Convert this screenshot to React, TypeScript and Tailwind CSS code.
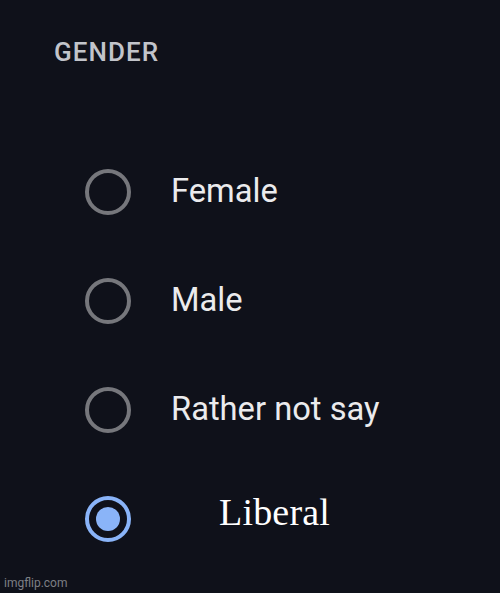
import React from "react";

const options = ["Female", "Male", "Rather not say"];

function Radio({ checked }: { checked?: boolean }) {
  if (checked) {
    return (
      <div className="w-[46px] h-[46px] rounded-full border-[4px] border-[#8ab4f8] flex items-center justify-center shrink-0">
        <div className="w-[24px] h-[24px] rounded-full bg-[#8ab4f8]" />
      </div>
    );
  }
  return <div className="w-[46px] h-[46px] rounded-full border-[4px] border-[#76777c] shrink-0" />;
}

export default function App() {
  return (
    <div className="w-[500px] h-[593px] bg-[#0f111a] relative overflow-hidden" style={{ fontFamily: "Roboto, 'Liberation Sans', sans-serif" }}>
      <div className="pt-[40px] pl-[54px]">
        <div className="text-[26px] leading-[24px] font-medium tracking-[0.04em] text-[#c2c4ca]">GENDER</div>
      </div>
      <div className="mt-[73px] flex flex-col pl-[85px]">
        {options.map((o) => (
          <div key={o} className="h-[109px] flex items-center">
            <Radio />
            <span className="ml-[40px] text-[32.7px] text-[#ebebed] leading-none">{o}</span>
          </div>
        ))}
        <div className="h-[109px] flex items-center">
          <Radio checked />
          <span
            className="ml-[88px] -mt-[14px] text-[38px] text-white leading-none tracking-[0.005em]"
            style={{ fontFamily: "'Liberation Serif', serif" }}
          >
            Liberal
          </span>
        </div>
      </div>
      <div className="absolute left-[4px] bottom-[4px] text-[12px] text-[#7d7f85] leading-none">imgflip.com</div>
    </div>
  );
}
